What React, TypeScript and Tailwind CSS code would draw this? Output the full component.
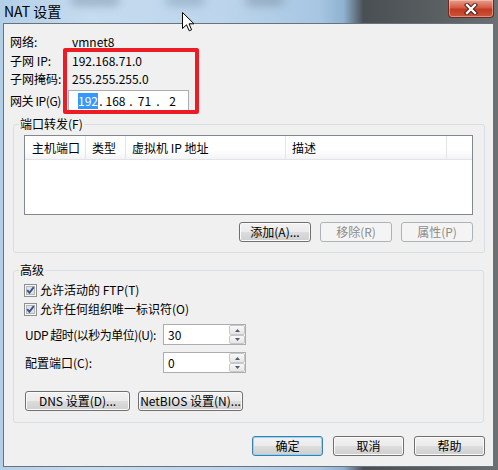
import React from "react";

type BtnProps = {
  children: React.ReactNode;
  w: string;
  disabled?: boolean;
  primary?: boolean;
};

function Btn({ children, w, disabled, primary }: BtnProps) {
  if (disabled) {
    return (
      <div
        className={`${w} h-[20px] flex items-center justify-center rounded-[3px] border border-[#adb2b5] bg-[#f4f4f4] text-[#8b8b8b] text-[12px] leading-[16px] whitespace-nowrap`}
      >
        {children}
      </div>
    );
  }
  return (
    <div
      className={`${w} h-[20px] flex items-center justify-center rounded-[3px] border ${
        primary
          ? "border-[#3c7fb1] shadow-[inset_0_0_0_1px_#8fd7f7]"
          : "border-[#707070] shadow-[inset_0_0_0_1px_#fbfbfb]"
      } bg-[linear-gradient(#f2f2f2_0%,#ebebeb_50%,#dddddd_50%,#cfcfcf_100%)] text-black text-[12px] leading-[16px] whitespace-nowrap`}
    >
      {children}
    </div>
  );
}

function Check() {
  return (
    <svg width="13" height="13" viewBox="0 0 13 13" className="shrink-0">
      <rect x="0.5" y="0.5" width="12" height="12" fill="#f6f6f6" stroke="#8e8f8f" />
      <rect x="2.5" y="2.5" width="8" height="8" fill="#dfe3e8" stroke="#b2b7bd" />
      <path d="M3.2 6.2 L5.4 8.8 L9.8 3.2" stroke="#3b4f86" strokeWidth="1.9" fill="none" />
    </svg>
  );
}

function Spin({ value }: { value: string }) {
  return (
    <div className="w-[83px] h-[21px] flex border border-[#abadb3] bg-white shrink-0">
      <div className="flex-1 pl-[4px] text-[12px] leading-[19px]">{value}</div>
      <div className="w-[16px] flex flex-col">
        <div className="h-[10px] flex items-center justify-center border border-[#c8c8c8] rounded-[2px] bg-[linear-gradient(#f8f8f8,#e6e6e6)]">
          <svg width="5" height="3" viewBox="0 0 5 3">
            <path d="M0 3 L2.5 0 L5 3 Z" fill="#4d5b6d" />
          </svg>
        </div>
        <div className="h-[9px] flex items-center justify-center border border-[#c8c8c8] rounded-[2px] bg-[linear-gradient(#f8f8f8,#e6e6e6)]">
          <svg width="5" height="3" viewBox="0 0 5 3">
            <path d="M0 0 L2.5 3 L5 0 Z" fill="#4d5b6d" />
          </svg>
        </div>
      </div>
    </div>
  );
}

export default function App() {
  return (
    <div className="relative w-[498px] h-[470px] overflow-hidden bg-[linear-gradient(to_right,#b3cfe8_0%,#c6dcef_18%,#bcd5ec_45%,#a7c6e2_64%,#8fb2d2_69%,#4a4f53_73%,#5a5f62_88%,#6c7073_100%)] font-['Noto_Sans_CJK_SC',sans-serif] text-black">
      {/* blurred glass patches */}
      <div className="absolute left-[70px] top-[-6px] w-[50px] h-[12px] rounded-full bg-[#8aa2b8] blur-[5px] opacity-70" />
      <div className="absolute left-[165px] top-[-6px] w-[40px] h-[12px] rounded-full bg-[#8aa2b8] blur-[5px] opacity-60" />
      <div className="absolute left-[245px] top-[-6px] w-[40px] h-[12px] rounded-full bg-[#7e95aa] blur-[5px] opacity-60" />

      {/* title bar */}
      <div className="relative h-[23px] flex items-start">
        <span className="pl-[4px] pt-[2px] text-[14px] leading-[18px] text-black">NAT 设置</span>
        <div className="ml-auto mr-[4px] w-[46px] h-[18px] rounded-b-[4px] border border-t-0 border-[#6a2a22] bg-[linear-gradient(#e8a08f_0%,#d65a43_45%,#c23a22_55%,#c8553a_100%)] shadow-[inset_0_0_0_1px_rgba(255,220,210,0.45)] flex items-center justify-center">
          <svg width="14" height="12" viewBox="0 0 14 12">
            <path d="M3 2 L11 10 M11 2 L3 10" stroke="#3a1a14" strokeWidth="4.2" strokeLinecap="square" />
            <path d="M3 2 L11 10 M11 2 L3 10" stroke="#ffffff" strokeWidth="2.4" strokeLinecap="square" />
          </svg>
        </div>
      </div>

      {/* client area */}
      <div className="ml-[3px] w-[491px] h-[444px] border border-[#69737d] bg-[#f0f0f0] text-[12px]">
        <div className="pt-[9px] pl-[6px]">
          <div className="flex h-[18px] items-center">
            <div className="w-[62px] leading-[18px]">网络:</div>
            <div className="leading-[18px]">vmnet8</div>
          </div>
          <div className="flex h-[18px] items-center mt-[1px]">
            <div className="w-[62px] leading-[18px]">子网 IP:</div>
            <div className="leading-[18px]">192.168.71.0</div>
          </div>
          <div className="flex h-[18px] items-center">
            <div className="w-[62px] leading-[18px]">子网掩码:</div>
            <div className="leading-[18px]">255.255.255.0</div>
          </div>
          <div className="flex h-[21px] items-center mt-[2px]">
            <div className="w-[58px] leading-[18px] whitespace-nowrap tracking-[-0.4px]">网关 IP(G)</div>
            <div className="w-[121px] h-[21px] border border-[#abadb3] bg-white flex items-center pl-[9px] leading-[16px]">
              <span className="w-[20px] text-center bg-[#3399ff] text-white">192</span>
              <span className="w-[6px] text-center">.</span>
              <span className="w-[23px] text-center">168</span>
              <span className="w-[8px] text-center">.</span>
              <span className="w-[19px] text-center">71</span>
              <span className="w-[8px] text-center">.</span>
              <span className="w-[21px] text-center">2</span>
            </div>
          </div>
        </div>

        {/* port forwarding */}
        <fieldset className="ml-[9px] mt-[4px] w-[472px] border border-[#d5dfe5] rounded-[3px] pb-[10px]">
          <legend className="ml-[5px] px-[1px] leading-[18px]">端口转发(F)</legend>
          <div className="ml-[10px] mt-[2px] w-[449px] h-[80px] border border-[#828790] bg-white">
            <div className="flex h-[24px] border-b border-[#e2e4e7] bg-[linear-gradient(#ffffff_0%,#ffffff_60%,#f3f4f6_100%)]">
              <div className="w-[61px] border-r border-[#e3e5e8] pl-[7px] leading-[23px]">主机端口</div>
              <div className="w-[40px] border-r border-[#e3e5e8] pl-[6px] leading-[23px]">类型</div>
              <div className="w-[160px] border-r border-[#e3e5e8] pl-[6px] leading-[23px]">虚拟机 IP 地址</div>
              <div className="w-[161px] border-r border-[#e3e5e8] pl-[6px] leading-[23px]">描述</div>
              <div className="flex-1" />
            </div>
          </div>
          <div className="ml-[10px] mt-[7px] w-[449px] flex justify-end gap-[9px]">
            <Btn w="w-[72px]">添加(A)...</Btn>
            <Btn w="w-[72px]" disabled>
              移除(R)
            </Btn>
            <Btn w="w-[72px]" disabled>
              属性(P)
            </Btn>
          </div>
        </fieldset>

        {/* advanced */}
        <fieldset className="ml-[9px] mt-[8px] w-[471px] border border-[#d5dfe5] rounded-[3px] pb-[11px]">
          <legend className="ml-[5px] px-[1px] leading-[18px]">高级</legend>
          <div className="mt-[2px] pl-[10px] h-[18px] flex items-center gap-[3px]">
            <Check />
            <span className="leading-[18px]">允许活动的 FTP(T)</span>
          </div>
          <div className="mt-[1px] pl-[10px] h-[18px] flex items-center gap-[3px]">
            <Check />
            <span className="leading-[18px]">允许任何组织唯一标识符(O)</span>
          </div>
          <div className="mt-[6px] pl-[11px] h-[21px] flex items-center">
            <div className="w-[138px] shrink-0 leading-[18px] whitespace-nowrap tracking-[-0.5px]">UDP 超时(以秒为单位)(U):</div>
            <Spin value="30" />
          </div>
          <div className="mt-[7px] pl-[11px] h-[21px] flex items-center">
            <div className="w-[138px] shrink-0 leading-[18px] whitespace-nowrap">配置端口(C):</div>
            <Spin value="0" />
          </div>
          <div className="mt-[18px] pl-[11px] flex gap-[8px]">
            <Btn w="w-[105px]">DNS 设置(D)...</Btn>
            <Btn w="w-[105px]">NetBIOS 设置(N)...</Btn>
          </div>
        </fieldset>

        <div className="mt-[13px] mr-[8px] flex justify-end gap-[10px]">
          <Btn w="w-[71px]" primary>
            确定
          </Btn>
          <Btn w="w-[71px]">取消</Btn>
          <Btn w="w-[71px]">帮助</Btn>
        </div>
      </div>

      {/* red annotation box */}
      <div className="absolute left-[63px] top-[48px] w-[136px] h-[66px] border-[4px] border-[#ec1c24] rounded-[2px]" />

      {/* mouse cursor */}
      <svg className="absolute left-[182px] top-[12px]" width="13" height="20" viewBox="0 0 13 20">
        <path
          d="M0.5 0.5 L0.5 16.5 L4.5 12.8 L7.2 18.8 L9.6 17.8 L7 11.8 L12 11.8 Z"
          fill="#ffffff"
          stroke="#000000"
          strokeWidth="1"
          strokeLinejoin="round"
        />
      </svg>
    </div>
  );
}
